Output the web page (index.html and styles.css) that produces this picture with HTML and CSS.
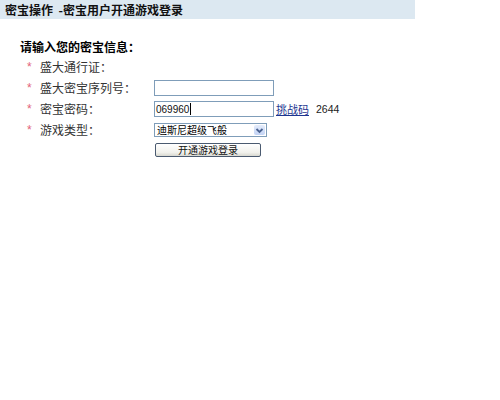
FILE: index.html
```html
<!DOCTYPE html>
<html lang="zh-CN">
<head>
<meta charset="utf-8">
<title>密宝操作</title>
<link rel="stylesheet" href="styles.css">
</head>
<body>
<div class="titlebar">密宝操作&nbsp; -密宝用户开通游戏登录</div>
<div class="main">
  <div class="heading">请输入您的密宝信息：</div>
  <div class="form">
    <span class="star">*</span><span class="label">盛大通行证：</span><span class="ctrl"></span>
    <span class="star">*</span><span class="label">盛大密宝序列号：</span><span class="ctrl"><span class="input"></span></span>
    <span class="star">*</span><span class="label">密宝密码：</span>
    <span class="ctrl"><span class="input"><span class="digits">069960</span><span class="caret"></span></span><a class="link" href="#">挑战码</a><span class="code">2644</span></span>
    <span class="star">*</span><span class="label">游戏类型：</span>
    <span class="ctrl"><span class="select"><span class="seltext">迪斯尼超级飞般</span><span class="arrow"><svg width="9" height="7" viewBox="0 0 9 7"><path d="M1.5 2 L4.5 5 L7.5 2" fill="none" stroke="#4a6290" stroke-width="1.8"/></svg></span></span></span>
    <span class="star"></span><span class="label"></span><span class="ctrl"><span class="button">开通游戏登录</span></span>
  </div>
</div>
</body>
</html>
```

FILE: styles.css
```css
html, body {
  margin: 0;
  padding: 0;
  background: #ffffff;
}
body {
  font-family: "Noto Sans CJK SC", "Liberation Sans", sans-serif;
  font-size: 12px;
  color: #000;
}
.titlebar {
  width: 410px;
  height: 19px;
  line-height: 19px;
  padding-left: 5px;
  background: #dce8f1;
  font-weight: bold;
  font-size: 12px;
  color: #111;
}
.main {
  padding: 21px 0 0 20px;
}
.heading {
  height: 14px;
  line-height: 14px;
  font-weight: bold;
  color: #000;
}
.form {
  margin-top: 5px;
  padding-left: 7px;
  display: grid;
  grid-template-columns: 13px 114px auto;
  grid-template-rows: 16px 16px 16px 16px 14px;
  row-gap: 5px;
  align-items: center;
}
.star {
  color: #e2627a;
  font-family: "Liberation Sans", sans-serif;
  font-size: 12px;
  line-height: 16px;
}
.label {
  color: #333;
  line-height: 16px;
}
.ctrl {
  display: flex;
  align-items: center;
  height: 16px;
}
.input {
  box-sizing: border-box;
  width: 120px;
  height: 16px;
  border: 1px solid #7f9db9;
  background: #fff;
  display: flex;
  align-items: center;
  padding-left: 1px;
}
.digits {
  font-family: "Liberation Sans", sans-serif;
  font-size: 10px;
  color: #111;
}
.caret {
  width: 1px;
  height: 12px;
  background: #000;
  margin-left: 1px;
}
.link {
  margin-left: 2px;
  color: #1d3590;
  text-decoration: underline;
  font-size: 11px;
  line-height: 14px;
}
.code {
  margin-left: 7px;
  font-family: "Liberation Sans", sans-serif;
  font-size: 10.5px;
  color: #222;
}
.select {
  box-sizing: border-box;
  width: 113px;
  height: 14px;
  border: 1px solid #7f9db9;
  display: flex;
  align-items: center;
  justify-content: space-between;
  background: #fff;
}
.seltext {
  padding-left: 2px;
  font-size: 10px;
  line-height: 12px;
  color: #000;
}
.arrow {
  width: 11px;
  height: 10px;
  margin-right: 1px;
  background: linear-gradient(#e4ecfb, #c3d3f5);
  border-radius: 2px;
  display: flex;
  align-items: center;
  justify-content: center;
}
.arrow svg {
  display: block;
}
.button {
  box-sizing: border-box;
  width: 106px;
  height: 14px;
  margin-left: 1px;
  border: 1px solid #4a5a70;
  border-radius: 2px;
  background: linear-gradient(#ffffff, #f1f1ec 70%, #d8d8d0);
  text-align: center;
  font-size: 10px;
  line-height: 12px;
  color: #111;
}
```
